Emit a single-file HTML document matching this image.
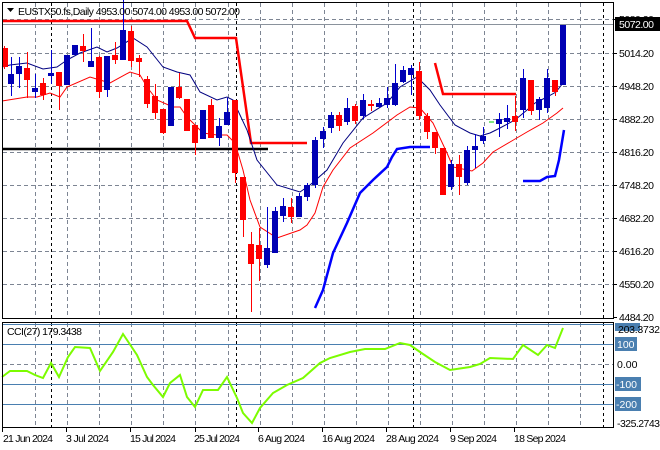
<!DOCTYPE html>
<html><head><meta charset="utf-8"><style>
html,body{margin:0;padding:0;background:#fff;}
svg{display:block;font-family:"Liberation Sans",sans-serif;}
</style></head><body>
<svg width="660" height="450" viewBox="0 0 660 450" xmlns="http://www.w3.org/2000/svg">
<rect width="660" height="450" fill="#fff"/>
<g stroke="#7d8593" stroke-width="1" stroke-dasharray="4,3" fill="none">
<path d="M35.5 3V318M67.5 3V318M99.5 3V318M131.5 3V318M163.5 3V318M195.5 3V318M228.5 3V318M260.5 3V318M292.5 3V318M324.5 3V318M356.5 3V318M388.5 3V318M420.5 3V318M452.5 3V318M484.5 3V318M516.5 3V318M548.5 3V318M580.5 3V318"/>
<path d="M35.5 323V427M67.5 323V427M99.5 323V427M131.5 323V427M163.5 323V427M195.5 323V427M228.5 323V427M260.5 323V427M292.5 323V427M324.5 323V427M356.5 323V427M388.5 323V427M420.5 323V427M452.5 323V427M484.5 323V427M516.5 323V427M548.5 323V427M580.5 323V427"/>
<path d="M3 19.5H613M3 53.5H613M3 86.5H613M3 119.5H613M3 152.5H613M3 185.5H613M3 218.5H613M3 251.5H613M3 284.5H613M3 364.5H613"/>
</g>
<g stroke="#000" stroke-width="1" stroke-dasharray="3,3">
<path d="M51.5 3V318M236.5 3V318M413.5 3V318M603.5 3V318M51.5 323V427M236.5 323V427M413.5 323V427M603.5 323V427"/>
</g>
<line x1="3" y1="24.5" x2="613" y2="24.5" stroke="#8a929c"/>
<line x1="2" y1="149" x2="268" y2="149" stroke="#000" stroke-width="2.5"/>
<polyline fill="none" stroke="#ff0000" stroke-width="2.5" points="2,21 187,21 195,38 236,38 251,143 307,143"/>
<polyline fill="none" stroke="#ff0000" stroke-width="2.5" points="435,63 443,94 516,94"/>
<polyline fill="none" stroke="#0000ff" stroke-width="2.5" points="315,308 323,290 333,253 347,223 360,193 373,180 387,167 392,157 397,149 410,147 430,147"/>
<polyline fill="none" stroke="#0000ff" stroke-width="2.5" points="523,181 540,181 547,177 555,176 559,160 562,142 564,130"/>
<polyline fill="none" stroke="#000080" stroke-width="1" points="2,67 10,65 27,63 43,69 57,67 67,60 80,53 97,47 107,52 117,48 133,38 147,47 163,67 177,72 190,75 200,92 217,100 227,97 233,100 247,130 257,160 277,185 300,192 310,185 327,170 343,143 363,118 387,103 400,87 417,77 430,90 440,105 455,125 470,133 480,136 490,133 500,128 515,120 527,110 535,103 547,97 556,92 563,83"/>
<polyline fill="none" stroke="#ff0000" stroke-width="1" points="2,101 27,97 37,97 50,93 60,97 67,87 90,77 100,80 110,83 130,72 140,75 147,87 157,100 173,107 180,107 187,117 193,123 203,133 217,135 227,135 235,143 243,170 250,200 260,227 277,238 300,230 307,225 315,213 323,187 333,170 350,148 373,133 397,115 410,107 420,108 433,123 447,153 453,167 472,171 483,163 493,152 510,142 527,132 543,123 557,113 563,108"/>
<g stroke-width="1">
<path stroke="#ff0000" d="M4.5 46V69M27.5 52V98M43.5 78V100M59.5 72V110M83.5 34V62M99.5 56V98M115.5 42V64M131.5 26V67M139.5 55V77M147.5 76V108M155.5 84V119M163.5 109V134M179.5 73V99M187.5 99V131M195.5 125V155M211.5 99V138M235.5 100V183M243.5 177V237M251.5 232V312M259.5 228V281M291.5 198V223M339.5 112V131M355.5 104V124M371.5 100V111M419.5 62V120M427.5 113V139M435.5 132V154M443.5 148V195M459.5 155V195M515.5 96V131M531.5 80V115M555.5 80V96"/>
<path stroke="#0000d0" d="M11.5 57V96M19.5 57V88M35.5 74V98M51.5 50V84M67.5 55V85M75.5 45V55M91.5 28V67M107.5 56V97M123.5 0V60M171.5 87V126M203.5 110V139M219.5 118V146M227.5 98V125M267.5 207V268M275.5 207V253M283.5 198V222M299.5 193V217M307.5 183V201M315.5 137V188M323.5 127V148M331.5 112V133M347.5 98V125M363.5 94V119M379.5 98V108M387.5 87V108M395.5 64V106M403.5 66V83M411.5 65V95M451.5 160V190M467.5 146V185M475.5 134V168M483.5 127V144M499.5 113V137M507.5 105V129M523.5 69V118M539.5 97V120M547.5 69V113M563.5 25V85"/>
</g>
<g fill="#ff0000">
<rect x="2" y="48" width="6" height="19"/><rect x="24" y="68" width="6" height="12"/><rect x="40" y="83" width="6" height="12"/><rect x="56" y="72" width="6" height="14"/><rect x="80" y="46" width="6" height="5"/><rect x="96" y="57" width="6" height="35"/><rect x="112" y="55" width="6" height="5"/><rect x="128" y="31" width="6" height="30"/><rect x="136" y="58" width="6" height="4"/><rect x="144" y="79" width="6" height="25"/><rect x="152" y="96" width="6" height="17"/><rect x="160" y="109" width="6" height="24"/><rect x="176" y="87" width="6" height="11"/><rect x="184" y="99" width="6" height="32"/><rect x="192" y="125" width="6" height="18"/><rect x="208" y="105" width="6" height="33"/><rect x="232" y="100" width="6" height="73"/><rect x="240" y="177" width="6" height="43"/><rect x="248" y="244" width="6" height="20"/><rect x="256" y="245" width="6" height="14"/><rect x="288" y="207" width="6" height="10"/><rect x="336" y="115" width="6" height="11"/><rect x="352" y="106" width="6" height="15"/><rect x="368" y="104" width="6" height="2"/><rect x="416" y="71" width="6" height="45"/><rect x="424" y="116" width="6" height="16"/><rect x="432" y="132" width="6" height="16"/><rect x="440" y="148" width="6" height="47"/><rect x="456" y="164" width="6" height="13"/><rect x="512" y="116" width="6" height="6"/><rect x="528" y="80" width="6" height="31"/><rect x="552" y="80" width="6" height="12"/>
</g>
<g fill="#0000b4">
<rect x="8" y="74" width="6" height="10"/><rect x="16" y="66" width="6" height="8"/><rect x="32" y="88" width="6" height="4"/><rect x="48" y="73" width="6" height="3"/><rect x="64" y="55" width="6" height="30"/><rect x="72" y="45" width="6" height="10"/><rect x="88" y="61" width="6" height="6"/><rect x="104" y="56" width="6" height="34"/><rect x="120" y="30" width="6" height="30"/><rect x="168" y="87" width="6" height="39"/><rect x="200" y="110" width="6" height="29"/><rect x="216" y="126" width="6" height="12"/><rect x="224" y="112" width="6" height="13"/><rect x="264" y="248" width="6" height="17"/><rect x="272" y="211" width="6" height="42"/><rect x="280" y="206" width="6" height="10"/><rect x="296" y="196" width="6" height="21"/><rect x="304" y="185" width="6" height="12"/><rect x="312" y="140" width="6" height="45"/><rect x="320" y="131" width="6" height="8"/><rect x="328" y="115" width="6" height="13"/><rect x="344" y="108" width="6" height="14"/><rect x="360" y="100" width="6" height="16"/><rect x="376" y="103" width="6" height="4"/><rect x="384" y="98" width="6" height="7"/><rect x="392" y="83" width="6" height="22"/><rect x="400" y="70" width="6" height="12"/><rect x="408" y="68" width="6" height="7"/><rect x="448" y="164" width="6" height="23"/><rect x="464" y="150" width="6" height="33"/><rect x="472" y="146" width="6" height="4"/><rect x="480" y="136" width="6" height="5"/><rect x="496" y="119" width="6" height="5"/><rect x="504" y="118" width="6" height="4"/><rect x="520" y="78" width="6" height="32"/><rect x="536" y="99" width="6" height="11"/><rect x="544" y="78" width="6" height="30"/><rect x="560" y="25" width="6" height="60"/>
</g>
<line x1="489" y1="122" x2="494" y2="122" stroke="#00cc00"/>
<g stroke="#4a7fb0" stroke-width="1">
<line x1="3" y1="324.5" x2="613" y2="324.5"/><line x1="3" y1="344.5" x2="613" y2="344.5"/><line x1="3" y1="384.5" x2="613" y2="384.5"/><line x1="3" y1="404.5" x2="613" y2="404.5"/>
</g>
<polyline fill="none" stroke="#7cfc00" stroke-width="2" points="2,377 10,371 27,371 35,375 43,378 51,363 59,377 68,357 75,347 90,348 100,371 113,352 123,334 137,355 147,377 153,385 163,397 170,383 180,375 187,397 195,407 203,390 218,390 227,377 237,398 243,413 252,423 260,408 273,393 287,385 303,378 320,363 330,358 350,352 365,349 385,349 400,343 410,345 420,352 435,362 450,370 470,367 480,364 490,358 513,359 523,345 538,355 547,345 555,348 563,328"/>
<rect x="2.5" y="2.5" width="611" height="316" fill="none" stroke="#000"/>
<rect x="2.5" y="322.5" width="611" height="105" fill="none" stroke="#000"/>
<g stroke="#000"><path d="M613 19.5h4M613 53.5h4M613 86.5h4M613 119.5h4M613 152.5h4M613 185.5h4M613 218.5h4M613 251.5h4M613 284.5h4M613 317.5h4"/></g>
<g font-size="10.5" fill="#000">
<text x="619" y="23" textLength="35">5080.20</text>
<text x="619" y="57" textLength="35">5014.20</text>
<text x="619" y="90" textLength="35">4948.20</text>
<text x="619" y="123" textLength="35">4882.20</text>
<text x="619" y="156" textLength="35">4816.20</text>
<text x="619" y="189" textLength="35">4748.20</text>
<text x="619" y="222" textLength="35">4682.20</text>
<text x="619" y="255" textLength="35">4616.20</text>
<text x="619" y="288" textLength="35">4550.20</text>
<text x="619" y="321" textLength="35">4484.20</text>
</g>
<rect x="615" y="17" width="45" height="14" fill="#000"/>
<text x="619" y="28" font-size="10.5" fill="#fff" textLength="35">5072.00</text>
<rect x="615" y="323" width="25" height="8" fill="#4a7fb0"/>
<text x="618" y="333" font-size="10.5" fill="#000" textLength="42">203.3732</text>
<rect x="615" y="337" width="22" height="14" fill="#4a7fb0"/><text x="617" y="348" font-size="10.5" fill="#fff">100</text>
<text x="617" y="368" font-size="10.5" fill="#000">0.00</text>
<rect x="615" y="377" width="26" height="14" fill="#4a7fb0"/><text x="616" y="388" font-size="10.5" fill="#fff">-100</text>
<rect x="615" y="397" width="26" height="14" fill="#4a7fb0"/><text x="616" y="408" font-size="10.5" fill="#fff">-200</text>
<text x="617" y="427" font-size="10.5" fill="#000" textLength="43">-325.2743</text>
<g stroke="#000"><path d="M2.5 428v4M66.5 428v4M130.5 428v4M195.5 428v4M258.5 428v4M322.5 428v4M386.5 428v4M450.5 428v4M514.5 428v4"/></g>
<g font-size="10.5" fill="#000">
<text x="3" y="442" textLength="50">21 Jun 2024</text>
<text x="66" y="442" textLength="43">3 Jul 2024</text>
<text x="130" y="442" textLength="46">15 Jul 2024</text>
<text x="194" y="442" textLength="46">25 Jul 2024</text>
<text x="258" y="442" textLength="47">6 Aug 2024</text>
<text x="322" y="442" textLength="53">16 Aug 2024</text>
<text x="386" y="442" textLength="53">28 Aug 2024</text>
<text x="450" y="442" textLength="47">9 Sep 2024</text>
<text x="514" y="442" textLength="52">18 Sep 2024</text>
</g>
<path d="M7 8h7l-3.5 4z" fill="#000"/>
<text x="18" y="15" font-size="10.5" fill="#000" textLength="222">EUSTX50.fs,Daily  4953.00 5074.00 4953.00 5072.00</text>
<text x="7" y="335" font-size="10.5" fill="#000" textLength="75">CCI(27) 179.3438</text>
</svg>
</body></html>
